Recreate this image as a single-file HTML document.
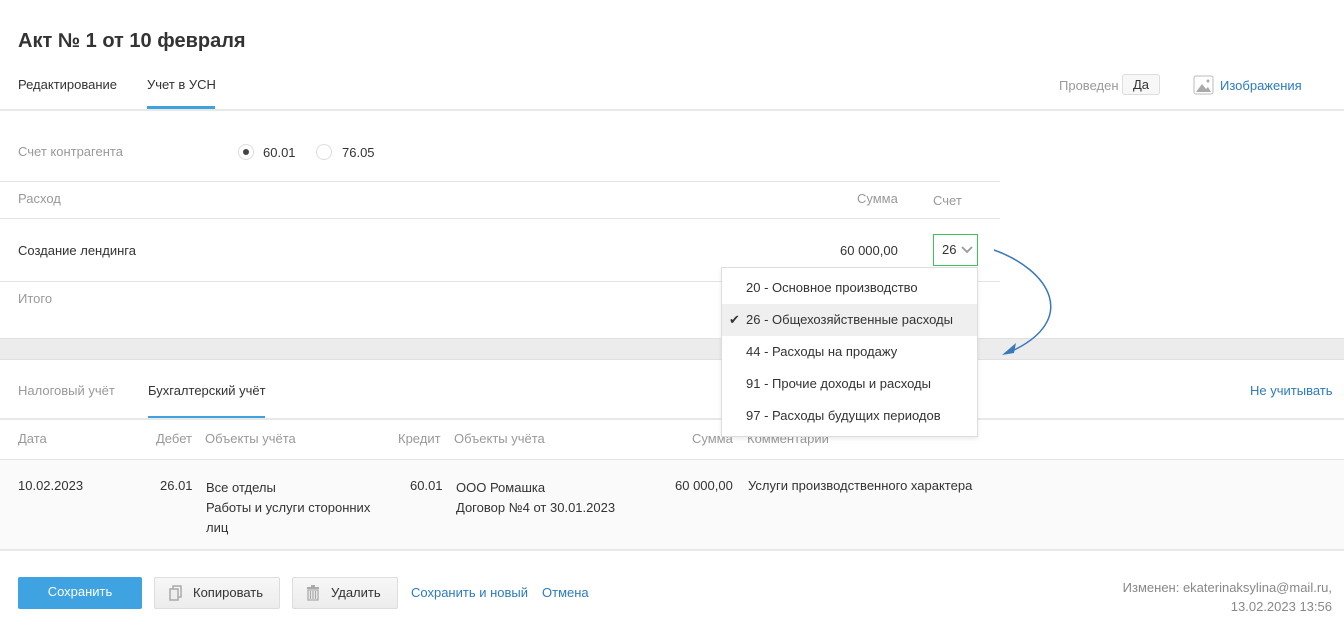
<!DOCTYPE html>
<html><head><meta charset="utf-8"><style>
*{margin:0;padding:0;box-sizing:border-box}
body{width:1344px;height:629px;overflow:hidden;background:#fff;font-family:"Liberation Sans",Arial,sans-serif;font-size:13px;color:#333;position:relative}
.a{position:absolute;white-space:nowrap}
.g{color:#999}
.l{color:#2b7bbf}
.hr{position:absolute;height:1px;background:#e3e3e3}
</style></head><body>
<div class="a" style="left:18px;top:30px;font-size:20px;font-weight:bold;color:#333">Акт № 1 от 10 февраля</div>
<div class="a" style="left:18px;top:77px">Редактирование</div>
<div class="a" style="left:147px;top:77px">Учет в УСН</div>
<div class="a" style="left:147px;top:106px;width:68px;height:3px;background:#3ea2de"></div>
<div class="hr" style="left:0;top:109px;width:1344px;height:2px;background:#e8e8e8"></div>
<div class="a g" style="left:1059px;top:78px">Проведен</div>
<div class="a" style="left:1122px;top:74px;width:38px;height:21px;border:1px solid #ddd;border-radius:3px;background:#f7f7f7;text-align:center;line-height:19px">Да</div>
<svg class="a" style="left:1193px;top:75px" width="22" height="20" viewBox="0 0 22 20"><rect x="1" y="1" width="19" height="18" rx="2" fill="#fff" stroke="#bbb"/><path d="M3 17 L9 9 L13 14 L15 12 L18 17Z" fill="#aaa"/><circle cx="15" cy="6" r="1.5" fill="#aaa"/></svg>
<div class="a l" style="left:1220px;top:78px">Изображения</div>

<div class="a g" style="left:18px;top:144px">Счет контрагента</div>
<div class="a" style="left:238px;top:144px;width:16px;height:16px;border:1px solid #ddd;border-radius:50%"><div style="position:absolute;left:4px;top:4px;width:6px;height:6px;border-radius:50%;background:#444"></div></div>
<div class="a" style="left:263px;top:145px">60.01</div>
<div class="a" style="left:316px;top:144px;width:16px;height:16px;border:1px solid #ddd;border-radius:50%"></div>
<div class="a" style="left:342px;top:145px">76.05</div>
<div class="hr" style="left:0;top:181px;width:1000px"></div>
<div class="a g" style="left:18px;top:191px">Расход</div>
<div class="a g" style="left:857px;top:191px">Сумма</div>
<div class="a g" style="left:933px;top:193px">Счет</div>
<div class="hr" style="left:0;top:218px;width:1000px"></div>
<div class="a" style="left:18px;top:243px">Создание лендинга</div>
<div class="a" style="left:840px;top:243px">60 000,00</div>
<div class="a" style="left:933px;top:234px;width:45px;height:32px;border:1px solid #3cc35a;line-height:30px;padding-left:8px">26<svg style="position:absolute;left:27px;top:11px" width="12" height="8" viewBox="0 0 12 8"><path d="M1 1 L6 6 L11 1" fill="none" stroke="#999" stroke-width="1.8"/></svg></div>
<div class="hr" style="left:0;top:281px;width:1000px"></div>
<div class="a g" style="left:18px;top:291px">Итого</div>

<div class="a" style="left:0;top:338px;width:1344px;height:22px;background:#ececec;border-top:1px solid #e0e0e0;border-bottom:1px solid #e0e0e0"></div>
<svg class="a" style="left:990px;top:245px" width="80" height="115" viewBox="0 0 80 115"><path d="M4 5 C60 25 90 75 20 107" fill="none" stroke="#3a78bd" stroke-width="1.5"/><path d="M12 110 L26 98 L24 108Z" fill="#3a78bd"/></svg>

<div class="a g" style="left:18px;top:383px">Налоговый учёт</div>
<div class="a" style="left:148px;top:383px">Бухгалтерский учёт</div>
<div class="a" style="left:148px;top:416px;width:117px;height:3px;background:#3ea2de"></div>
<div class="a l" style="left:1250px;top:383px">Не учитывать</div>
<div class="hr" style="left:0;top:418px;width:1344px;height:2px;background:#e8e8e8"></div>
<div class="a g" style="left:18px;top:431px">Дата</div>
<div class="a g" style="left:156px;top:431px">Дебет</div>
<div class="a g" style="left:205px;top:431px">Объекты учёта</div>
<div class="a g" style="left:398px;top:431px">Кредит</div>
<div class="a g" style="left:454px;top:431px">Объекты учёта</div>
<div class="a g" style="left:692px;top:431px">Сумма</div>
<div class="a g" style="left:747px;top:431px">Комментарии</div>
<div class="a" style="left:0;top:459px;width:1344px;height:92px;background:#fafafa;border-top:1px solid #e3e3e3;border-bottom:2px solid #e8e8e8"></div>
<div class="a" style="left:18px;top:478px">10.02.2023</div>
<div class="a" style="left:160px;top:478px">26.01</div>
<div class="a" style="left:206px;top:478px;line-height:20px">Все отделы<br>Работы и услуги сторонних<br>лиц</div>
<div class="a" style="left:410px;top:478px">60.01</div>
<div class="a" style="left:456px;top:478px;line-height:20px">ООО Ромашка<br>Договор №4 от 30.01.2023</div>
<div class="a" style="left:675px;top:478px">60 000,00</div>
<div class="a" style="left:748px;top:478px">Услуги производственного характера</div>

<div class="a" style="left:721px;top:267px;width:257px;height:170px;background:#fff;border:1px solid #ddd;box-shadow:0 2px 4px rgba(0,0,0,.08);padding-top:4px">
<div style="height:32px;line-height:32px;padding-left:24px">20 - Основное производство</div>
<div style="height:32px;line-height:32px;padding-left:24px;background:#efefef;position:relative"><span style="position:absolute;left:7px;top:0">✔</span>26 - Общехозяйственные расходы</div>
<div style="height:32px;line-height:32px;padding-left:24px">44 - Расходы на продажу</div>
<div style="height:32px;line-height:32px;padding-left:24px">91 - Прочие доходы и расходы</div>
<div style="height:32px;line-height:32px;padding-left:24px">97 - Расходы будущих периодов</div>
</div>

<div class="a" style="left:18px;top:577px;width:124px;height:32px;background:#3ea3e0;border-radius:2px;color:#fff;text-align:center;line-height:30px">Сохранить</div>
<div class="a" style="left:154px;top:577px;width:126px;height:32px;background:linear-gradient(#f7f7f7,#ececec);border:1px solid #ddd;border-radius:2px;line-height:30px;padding-left:38px">Копировать
<svg style="position:absolute;left:14px;top:7px" width="14" height="16" viewBox="0 0 14 16"><rect x="4" y="1" width="8" height="11" fill="none" stroke="#aaa" stroke-width="1.5"/><rect x="1" y="4" width="8" height="11" fill="#eee" stroke="#aaa" stroke-width="1.5"/></svg></div>
<div class="a" style="left:292px;top:577px;width:106px;height:32px;background:linear-gradient(#f7f7f7,#ececec);border:1px solid #ddd;border-radius:2px;line-height:30px;padding-left:38px">Удалить
<svg style="position:absolute;left:14px;top:7px" width="12" height="16" viewBox="0 0 12 16"><rect x="0" y="2" width="12" height="2" fill="#aaa"/><rect x="4" y="0" width="4" height="2" fill="#aaa"/><path d="M1 5 H11 V15 H1Z M3.5 6 V14 M6 6 V14 M8.5 6 V14" fill="none" stroke="#aaa" stroke-width="1.3"/></svg></div>
<div class="a l" style="left:411px;top:585px">Сохранить и новый</div>
<div class="a l" style="left:542px;top:585px">Отмена</div>
<div class="a g" style="right:12px;top:578px;text-align:right;line-height:19px;color:#888">Изменен: ekaterinaksylina@mail.ru,<br>13.02.2023 13:56</div>
</body></html>
